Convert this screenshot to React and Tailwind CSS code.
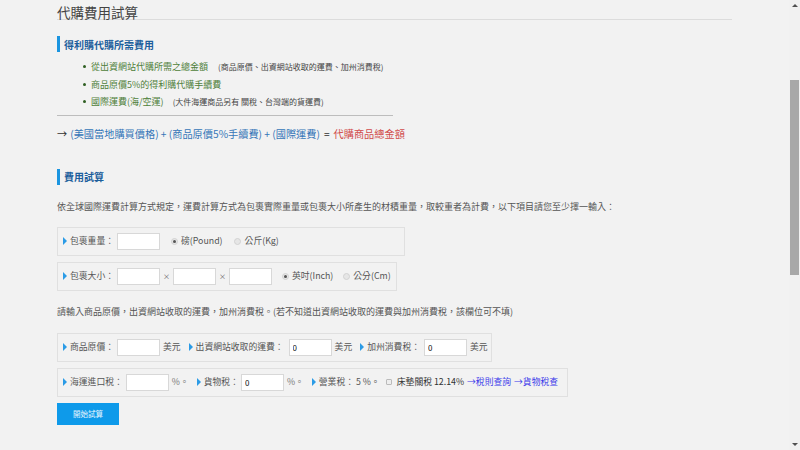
import React from 'react';

const font = { fontFamily: '"Noto Sans CJK TC", "Liberation Sans", sans-serif' };

// small blue triangle before each field label
const Marker = ({ className = '' }) => (
  <span className={'inline-block w-0 h-0 border-y-[4px] border-y-transparent border-l-[4px] border-l-[#2b9be6] ' + className} />
);

const Radio = ({ checked, className = '' }) => (
  <span className={'flex items-center justify-center w-[7px] h-[7px] rounded-full border border-[#d2d2d2] bg-[#e6e6e6] ' + className}>
    {checked && <span className="w-[3px] h-[3px] rounded-full bg-[#555]" />}
  </span>
);

const Field = ({ value = '', className = '' }) => (
  <input
    readOnly
    value={value}
    className={'w-[43px] h-[17px] bg-white border border-[#d8d8d8] px-[3px] text-[8px] text-[#111] outline-none ' + className}
  />
);

const Box = ({ width, children }) => (
  <div className={'flex items-center h-[29px] border border-[#e0e0e0] pl-[5px] text-[8.8px] text-[#555] whitespace-nowrap *:shrink-0 ' + width}>
    {children}
  </div>
);

const Heading = ({ children, className = '' }) => (
  <div className={'flex items-center h-[16px] border-l-[3px] border-[#1b95e0] pl-[4px] text-[10px] font-bold text-[#1d5f9c] ' + className}>
    {children}
  </div>
);

export default function App() {
  return (
    <div className="flex w-[800px] h-[450px] overflow-hidden bg-[#f2f2f2]" style={font}>
      <div className="flex-1 pl-[57px]">
        {/* title */}
        <div className="w-[675px] h-[20px] pt-[4px] border-b border-[#dcdcdc] text-[13.5px] leading-[16px] text-[#444]">
          代購費用試算
        </div>

        <Heading className="mt-[16px]">得利購代購所需費用</Heading>

        <ul className="mt-[6px] pl-[26px] text-[9px] text-[#4f7f3a]">
          <li className="flex items-center h-[17.5px]">
            <span className="w-[3px] h-[3px] rounded-full bg-[#2f5f22] mr-[5px]" />
            從出資網站代購所需之總金額
            <span className="ml-[10px] text-[8px] text-[#444]">(商品原價、出資網站收取的運費、加州消費稅)</span>
          </li>
          <li className="flex items-center h-[17.5px]">
            <span className="w-[3px] h-[3px] rounded-full bg-[#2f5f22] mr-[5px]" />
            商品原價5%的得利購代購手續費
          </li>
          <li className="flex items-center h-[17.5px]">
            <span className="w-[3px] h-[3px] rounded-full bg-[#2f5f22] mr-[5px]" />
            國際運費(海/空運)
            <span className="ml-[9px] text-[8px] text-[#444]">(大件海運商品另有 關稅、台灣端的貨運費)</span>
          </li>
        </ul>

        <div className="w-[336px] mt-[4px] border-b border-[#bdbdbd]" />

        <div className="mt-[10px] h-[16px] flex items-center text-[10.2px] text-[#3576b8] whitespace-nowrap">
          <span className="text-[#333] mr-[3px]">→</span>
          (美國當地購買價格) + (商品原價5%手續費) + (國際運費)
          <span className="text-[#333] mx-[4px]">=</span>
          <span className="text-[#d14b4b]">代購商品總金額</span>
        </div>

        <Heading className="mt-[27px]">費用試算</Heading>

        <p className="mt-[15px] h-[14px] leading-[14px] text-[9px] text-[#555] whitespace-nowrap">
          依全球國際運費計算方式規定，運費計算方式為包裹實際重量或包裹大小所產生的材積重量，取較重者為計費，以下項目請您至少擇一輸入：
        </p>

        <div className="mt-[13px] flex flex-col gap-[6px]">
          <Box width="w-[348px]">
            <Marker />
            <span className="ml-[3px]">包裹重量：</span>
            <Field className="ml-[3px]" />
            <Radio checked className="ml-[11px]" />
            <span className="ml-[3px]">磅(Pound)</span>
            <Radio className="ml-[11px]" />
            <span className="ml-[4px]">公斤(Kg)</span>
          </Box>
          <Box width="w-[340px]">
            <Marker />
            <span className="ml-[3px]">包裹大小：</span>
            <Field className="ml-[3px]" />
            <span className="ml-[3px] text-[7px]">×</span>
            <Field className="ml-[3px]" />
            <span className="ml-[3px] text-[7px]">×</span>
            <Field className="ml-[3px]" />
            <Radio checked className="ml-[10px]" />
            <span className="ml-[3px]">英吋(Inch)</span>
            <Radio className="ml-[10px]" />
            <span className="ml-[3px]">公分(Cm)</span>
          </Box>
        </div>

        <p className="mt-[14px] h-[14px] leading-[14px] text-[9px] text-[#555] whitespace-nowrap">
          請輸入商品原價，出資網站收取的運費，加州消費稅。(若不知道出資網站收取的運費與加州消費稅，該欄位可不填)
        </p>

        <div className="mt-[14px] flex flex-col gap-[6px]">
          <Box width="w-[435px]">
            <Marker />
            <span className="ml-[3px]">商品原價：</span>
            <Field className="ml-[3px]" />
            <span className="ml-[3px]">美元</span>
            <Marker className="ml-[8px]" />
            <span className="ml-[3px]">出資網站收取的運費：</span>
            <Field value="0" className="ml-[5px]" />
            <span className="ml-[3px]">美元</span>
            <Marker className="ml-[8px]" />
            <span className="ml-[3px]">加州消費稅：</span>
            <Field value="0" className="ml-[4px]" />
            <span className="ml-[3px]">美元</span>
          </Box>
          <Box width="w-[511px]">
            <Marker />
            <span className="ml-[3px]">海運進口稅：</span>
            <Field className="ml-[3px]" />
            <span className="ml-[3px] text-[#777]">%。</span>
            <Marker className="ml-[8px]" />
            <span className="ml-[3px]">貨物稅：</span>
            <Field value="0" className="ml-[2px]" />
            <span className="ml-[3px] text-[#777]">%。</span>
            <Marker className="ml-[8px]" />
            <span className="ml-[3px]">營業稅：<span className="ml-[2px]">5 %</span>。</span>
            <span className="ml-[6px] w-[6px] h-[6px] border border-[#bbb] bg-[#eee] rounded-[1px]" />
            <span className="ml-[5px] text-[8.8px] text-[#333]">床墊關稅 12.14%</span>
            <span className="ml-[3px] text-[8.8px] text-[#3b3bea]">→稅則查詢</span>
            <span className="ml-[3px] text-[8.8px] text-[#3b3bea]">→貨物稅查</span>
          </Box>
        </div>

        <button className="mt-[6px] w-[62px] h-[22px] bg-[#0e9aea] text-[7.5px] text-white/90">
          開始試算
        </button>
      </div>

      {/* browser scrollbar */}
      <div className="w-[11px] h-full flex flex-col items-center bg-[#f1f1f1]">
        <span className="mt-[4px] w-0 h-0 border-x-[3px] border-x-transparent border-b-[3px] border-b-[#505050]" />
        <div className="mt-[73px] w-[9px] h-[195px] bg-[#a8a8a8]" />
        <span className="mt-auto mb-[4px] w-0 h-0 border-x-[3px] border-x-transparent border-t-[3px] border-t-[#505050]" />
      </div>
    </div>
  );
}
